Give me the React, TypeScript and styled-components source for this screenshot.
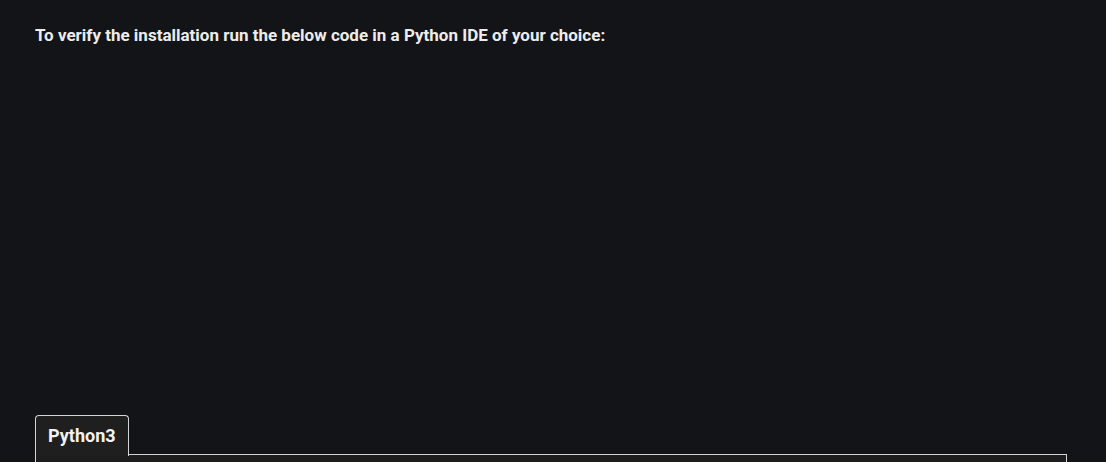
import styled, { createGlobalStyle } from "styled-components";

const GlobalStyle = createGlobalStyle`
  html, body {
    margin: 0;
    padding: 0;
    background: #131417;
    overflow: hidden;
  }
`;

const Page = styled.div`
  width: 1106px;
  height: 462px;
  padding: 0 39px 0 35px;
  box-sizing: border-box;
  display: flex;
  flex-direction: column;
  font-family: Roboto, "Open Sans", sans-serif;
  color: #ececec;
`;

const Intro = styled.p`
  margin: 24px 0 0;
  font-size: 17px;
  font-weight: 700;
  line-height: 22px;
`;

const Spacer = styled.div`
  flex: 1;
`;

const CodeBlock = styled.div`
  display: flex;
  flex-direction: column;
  height: 47px;
`;

const TabRow = styled.div`
  display: flex;
  align-items: flex-end;
`;

const Tab = styled.div`
  width: 94px;
  height: 41px;
  box-sizing: border-box;
  padding: 9px 0 0 12px;
  border: 1px solid #d4d4d4;
  border-bottom: none;
  border-radius: 4px 4px 0 0;
  background: #1f1f1f;
  font-size: 18px;
  font-weight: 700;
  color: #f2f2f2;
  margin-bottom: -1px;
  position: relative;
  z-index: 1;
`;

const TabLine = styled.div`
  flex: 1;
  border-bottom: 1px solid #d4d4d4;
`;

const Body = styled.div`
  flex: 1;
  background: #1d1d1d;
  border-left: 1px solid #d4d4d4;
  border-right: 1px solid #d4d4d4;
`;

export default function App() {
  return (
    <>
      <GlobalStyle />
      <Page>
        <Intro>
          To verify the installation run the below code in a Python IDE of your
          choice:
        </Intro>
        <Spacer />
        <CodeBlock>
          <TabRow>
            <Tab>Python3</Tab>
            <TabLine />
          </TabRow>
          <Body />
        </CodeBlock>
      </Page>
    </>
  );
}
